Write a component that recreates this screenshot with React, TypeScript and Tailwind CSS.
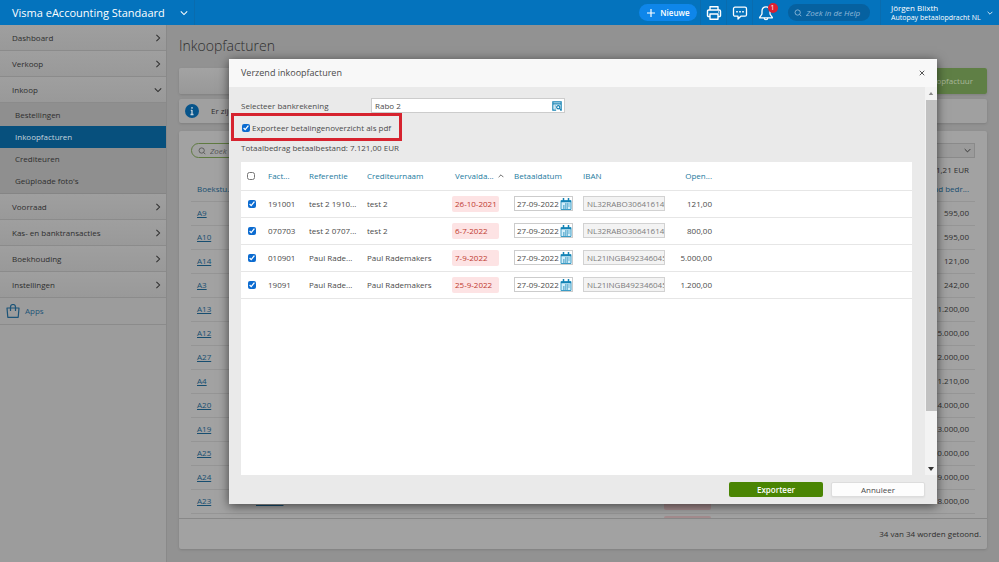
import type { ReactNode } from "react";

const INVOICES = [
  { id: "A9", amount: "595,00" },
  { id: "A10", amount: "595,00" },
  { id: "A14", amount: "121,00" },
  { id: "A3", amount: "242,00" },
  { id: "A13", amount: "1.200,00" },
  { id: "A12", amount: "5.000,00" },
  { id: "A27", amount: "2.000,00" },
  { id: "A4", amount: "1.210,00" },
  { id: "A20", amount: "4.000,00" },
  { id: "A19", amount: "3.000,00" },
  { id: "A25", amount: "10.000,00" },
  { id: "A24", amount: "9.000,00" },
  { id: "A23", amount: "8.000,00", number: "230901", due: "25-9-2022" },
];

const PAYMENTS = [
  { number: "191001", reference: "test 2 1910...", creditor: "test 2", due: "26-10-2021", iban: "NL32RABO3064161486", open: "121,00" },
  { number: "070703", reference: "test 2 0707...", creditor: "test 2", due: "6-7-2022", iban: "NL32RABO3064161486", open: "800,00" },
  { number: "010901", reference: "Paul Rade...", creditor: "Paul Rademakers", due: "7-9-2022", iban: "NL21INGB4923460455", open: "5.000,00" },
  { number: "19091", reference: "Paul Rade...", creditor: "Paul Rademakers", due: "25-9-2022", iban: "NL21INGB4923460455", open: "1.200,00" },
];

function Chevron({ dir = "down", className }: { dir?: "down" | "right" | "up"; className?: string }) {
  const d = { down: "M1 3l4 4 4-4", up: "M1 7l4-4 4 4", right: "M3 1l4 4-4 4" }[dir];
  return (
    <svg viewBox="0 0 10 10" className={className} fill="none" stroke="currentColor" strokeWidth="1.3" aria-hidden="true">
      <path d={d} />
    </svg>
  );
}

function SearchIcon({ className }: { className?: string }) {
  return (
    <svg viewBox="0 0 10 10" className={className} fill="none" stroke="currentColor" strokeWidth="1.1" aria-hidden="true">
      <circle cx="4.6" cy="4.4" r="3.3" />
      <path d="M6.9 6.7l2.2 2.3" />
    </svg>
  );
}

function PrinterIcon() {
  return (
    <svg viewBox="0 0 16 16" className="size-4" fill="none" stroke="currentColor" strokeWidth="1.4" strokeLinejoin="round" aria-hidden="true">
      <path d="M4 5V1.7h8V5M4 11.5H2.6A1.1 1.1 0 011.5 10.4V6.2A1.2 1.2 0 012.7 5h10.6a1.2 1.2 0 011.2 1.2v4.2a1.1 1.1 0 01-1.1 1.1H12" />
      <path d="M4 9h8v5.3H4z" />
      <path d="M12 7h.8" />
    </svg>
  );
}

function ChatIcon() {
  return (
    <svg viewBox="0 0 16 16" className="size-4" fill="none" stroke="currentColor" strokeWidth="1.3" strokeLinejoin="round" aria-hidden="true">
      <path d="M3 2.2h10A1.5 1.5 0 0114.5 3.7v6A1.5 1.5 0 0113 11.2H8.8L6 14v-2.8H3A1.5 1.5 0 011.5 9.7v-6A1.5 1.5 0 013 2.2z" />
      <path d="M4.2 6.7h1.6M7.2 6.7h1.6M10.2 6.7h1.6" strokeWidth="1.6" />
    </svg>
  );
}

function BellIcon() {
  return (
    <svg viewBox="0 0 16 16" className="size-4" fill="none" stroke="currentColor" strokeWidth="1.3" strokeLinejoin="round" aria-hidden="true">
      <path d="M8 1.8c-2.6 0-4 1.9-4 4.2v2.6c0 1.6-1.8 2.2-2.400 4.200h12.800C13.800 10.800 12 10.200 12 8.600V6c0-2.300-1.400-4.200-4-4.200z" />
      <path d="M6.200 12.800c0 2.500 3.600 2.500 3.600 0" />
    </svg>
  );
}

function BagIcon() {
  return (
    <svg viewBox="0 0 14 14" className="size-3.5" fill="none" stroke="currentColor" strokeWidth="1.2" strokeLinejoin="round" aria-hidden="true">
      <path d="M1 4h12l-.8 9.300H1.800z" />
      <path d="M4.500 7V3a2.500 2.500 0 015 0v4" />
    </svg>
  );
}

function LookupIcon() {
  return (
    <svg viewBox="0 0 12 12" className="size-2.5" fill="none" stroke="#1482b4" strokeWidth="1.4" aria-hidden="true">
      <path d="M5 11H1V1h10v10h-1M1 3.500h10" />
      <path d="M3 6h2M3 8.500h1.500" strokeWidth="1" />
      <circle cx="7.500" cy="7.500" r="1.900" />
      <path d="M8.900 8.900l2 2.100" />
    </svg>
  );
}

function CalendarIcon() {
  return (
    <svg viewBox="0 0 12 12" className="size-3" fill="none" aria-hidden="true">
      <path d="M1 2.5h10v9H1z" fill="#d4effa" stroke="#3a9cc6" />
      <path d="M1 3.5h10" stroke="#1482b4" strokeWidth="1.5" />
      <path d="M3.500 0v3M8.500 0v3" stroke="#1482b4" strokeWidth="1.5" />
      <path d="M5 6h4.500M3 8h6.500M3 10h5" stroke="#1482b4" strokeDasharray="1.6 .4" />
    </svg>
  );
}

function NavItem({ label, open = false }: { label: string; open?: boolean }) {
  return (
    <button type="button" className="flex h-[26px] w-full items-center justify-between border-b border-[#8b8b8b] bg-linear-to-b from-[#9f9f9f] to-[#999] pt-px pr-1 pl-3 text-left">
      {label}
      <Chevron dir={open ? "down" : "right"} className="size-2" />
    </button>
  );
}

function Sidebar() {
  return (
    <nav className="w-[167px] shrink-0 border-r border-[#898989] bg-[#9c9c9c] text-[#2e2e2e]">
      <NavItem label="Dashboard" />
      <NavItem label="Verkoop" />
      <NavItem label="Inkoop" open />
      <div className="border-b border-[#858585] bg-[#8f8f8f] py-px">
        {["Bestellingen", "Inkoopfacturen", "Crediteuren", "Geüploade foto's"].map((label) => (
          <a
            key={label}
            href="#"
            className={
              label === "Inkoopfacturen"
                ? "flex h-[22px] items-center bg-[#07507d] pl-[15px] text-[#c4d4de]"
                : "flex h-[22px] items-center pl-[15px]"
            }
          >
            {label}
          </a>
        ))}
      </div>
      <NavItem label="Voorraad" />
      <NavItem label="Kas- en banktransacties" />
      <NavItem label="Boekhouding" />
      <NavItem label="Instellingen" />
      <a href="#" className="flex h-[27px] items-center gap-[5px] border-b border-[#8b8b8b] pl-1.5 text-[#1c5478]">
        <BagIcon />
        Apps
      </a>
    </nav>
  );
}

function HeaderCell({ children }: { children: ReactNode }) {
  return <div className="flex h-full w-[26px] items-center justify-center border-l border-[#0a6cae]">{children}</div>;
}

function TopBar() {
  return (
    <header className="flex h-[25px] shrink-0 items-center bg-[#0473bd] text-white">
      <button type="button" className="flex h-full items-center border-r border-[#0a6cae] pr-1.5 pl-3">
        <span className="w-[168px] text-left text-[11px]">Visma eAccounting Standaard</span>
        <Chevron className="size-2" />
      </button>
      <button type="button" className="mr-[3px] ml-auto flex h-[17px] w-[58px] items-center justify-center gap-1 rounded-full bg-[#0e86ea] font-semibold">
        <svg viewBox="0 0 10 10" className="size-2.5" stroke="currentColor" strokeWidth="1.2" aria-hidden="true">
          <path d="M5 1v8M1 5h8" />
        </svg>
        Nieuwe
      </button>
      <HeaderCell>
        <button type="button" aria-label="Afdrukken"><PrinterIcon /></button>
      </HeaderCell>
      <HeaderCell>
        <button type="button" aria-label="Berichten"><ChatIcon /></button>
      </HeaderCell>
      <HeaderCell>
        <button type="button" aria-label="Meldingen" className="relative">
          <BellIcon />
          <span className="absolute -top-0.5 -right-1 flex size-[10px] items-center justify-center rounded-full bg-[#dc2032] text-[7px] leading-none">1</span>
        </button>
      </HeaderCell>
      <label className="ml-2.5 flex h-[17px] w-[82px] items-center gap-1 rounded-full bg-[#0661a0] pl-1.5 text-[#8fb9da]">
        <SearchIcon className="size-2 shrink-0" />
        <input aria-label="Zoek in de Help" placeholder="Zoek in de Help" className="w-full min-w-0 italic outline-none placeholder:text-[#8fb9da]" />
      </label>
      <button type="button" className="ml-2.5 flex h-full w-[119px] items-center justify-between border-l border-[#0a6cae] pr-1.5 pl-2.5 text-left">
        <span className="leading-[10px] font-medium whitespace-nowrap">
          <span className="block">Jörgen Blixth</span>
          <span className="block text-[7px]">Autopay betaalopdracht NL</span>
        </span>
        <Chevron className="size-1.5 shrink-0" />
      </button>
    </header>
  );
}

function InvoicePage() {
  return (
    <div className="px-3 pt-[11px] text-[#2e2e2e]">
      <h1 className="mb-3 text-[14px] leading-5 font-light">Inkoopfacturen</h1>
      <div className="flex h-[26px] justify-end rounded-xs bg-linear-to-b from-[#a3a3a3] to-[#989898] shadow-sm">
        <button type="button" className="w-[110px] rounded-xs bg-[#5f7f45] pr-3.5 text-right text-[#a9b79b]">Nieuwe inkoopfactuur</button>
      </div>
      <div className="mt-[5px] flex h-6 items-center gap-3 rounded-xs bg-[#a0a0a0] px-1.5 shadow-sm">
        <svg viewBox="0 0 14 14" className="size-3.5" aria-hidden="true">
          <circle cx="7" cy="7" r="7" fill="#07548a" />
          <path d="M7 6v4.500M7 3v1.800M5.800 6.400H7M5.500 10.500h3" stroke="#c5d3dc" strokeWidth="1.3" />
        </svg>
        Er zijn
      </div>
      <section className="mt-2 rounded-xs bg-[#a2a2a2] shadow-sm">
        <div className="h-[387px] overflow-hidden px-3 pt-3">
          <div className="flex items-center justify-between">
            <label className="flex h-[15px] w-[150px] items-center gap-1 rounded-full border border-[#5f7a41] px-1.5 text-[#555]">
              <SearchIcon className="size-2 shrink-0" />
              <input aria-label="Zoek" placeholder="Zoek" className="w-full min-w-0 italic outline-none placeholder:text-[#555]" />
            </label>
            <div className="relative">
              <select aria-label="Filter" className="block h-[15px] w-[150px] appearance-none border border-[#8a8a8a] bg-[#9b9b9b]" />
              <Chevron className="pointer-events-none absolute top-1 right-1 size-[7px]" />
            </div>
          </div>
          <p className="flex h-[19px] items-end justify-end pr-1.5 pb-px">29.151,21 EUR</p>
          <table className="w-full table-fixed border-collapse">
            <thead>
              <tr className="h-6 border-b border-[#959595] text-left text-[#174e70]">
                <th className="w-[65px] pl-1.5 font-normal whitespace-nowrap">Boekstu...</th>
                <th className="w-[400px]" />
                <th />
                <th className="w-20 pr-1.5 text-right font-normal whitespace-nowrap">Openstaand bedr...</th>
              </tr>
            </thead>
            <tbody>
              {INVOICES.map((invoice) => (
                <tr key={invoice.id} className="h-6 border-b border-[#959595]">
                  <td className="pl-1.5"><a href="#" className="text-[#174e70] underline">{invoice.id}</a></td>
                  <td><a href="#" className="text-[#174e70] underline">{invoice.number}</a></td>
                  <td>
                    {invoice.due && <span className="ml-2 block h-[18px] w-[47px] rounded-xs bg-[#a38b8d] px-1 leading-[18px] text-[#84202a]">{invoice.due}</span>}
                  </td>
                  <td className="pr-1.5 text-right">{invoice.amount}</td>
                </tr>
              ))}
              <tr className="h-6">
                <td colSpan={2} />
                <td><span className="ml-2 block h-[18px] w-[47px] rounded-xs bg-[#a38b8d]" /></td>
                <td />
              </tr>
            </tbody>
          </table>
        </div>
        <footer className="flex h-[31px] items-center justify-end border-t border-[#888] pr-1.5">34 van 34 worden getoond.</footer>
      </section>
    </div>
  );
}

function PaymentTable() {
  return (
    <div className="h-[313px] bg-white">
      <table className="w-full table-fixed border-collapse">
        <thead>
          <tr className="h-7 border-b border-[#e6e6e6] text-left text-[#237a9e]">
            <th className="w-[27px] pl-1.5"><input type="checkbox" aria-label="Alles selecteren" className="block size-2" /></th>
            <th className="w-[41px] font-normal">Fact...</th>
            <th className="w-[58px] font-normal">Referentie</th>
            <th className="w-[85px] font-normal">Crediteurnaam</th>
            <th className="w-[62px] pl-[3px] font-normal" aria-sort="ascending">
              <span className="flex items-center gap-1">Vervalda...<Chevron dir="up" className="size-1.5 text-[#444]" /></span>
            </th>
            <th className="w-[69px] font-normal">Betaaldatum</th>
            <th className="w-[83px] font-normal">IBAN</th>
            <th className="w-[46px] text-right font-normal">Open...</th>
            <th />
          </tr>
        </thead>
        <tbody>
          {PAYMENTS.map((payment) => (
            <tr key={payment.number} className="h-[27px] border-b border-[#e6e6e6]">
              <td className="pl-[7px]"><input type="checkbox" defaultChecked aria-label={payment.number} className="block size-2 accent-[#0b6bd0]" /></td>
              <td>{payment.number}</td>
              <td>{payment.reference}</td>
              <td>{payment.creditor}</td>
              <td><span className="block h-4 w-[47px] rounded-xs bg-[#fde3e4] px-[3px] leading-4 whitespace-nowrap text-[#c0392f]">{payment.due}</span></td>
              <td>
                <div className="flex h-[15px] w-[59px] items-center border border-[#ccc] bg-white pl-0.5">
                  <input aria-label="Betaaldatum" defaultValue="27-09-2022" className="w-full min-w-0 outline-none" />
                  <button type="button" aria-label="Kalender" className="shrink-0"><CalendarIcon /></button>
                </div>
              </td>
              <td>
                <input aria-label="IBAN" readOnly defaultValue={payment.iban} className="block h-[15px] w-[82px] border border-[#d2d2d2] bg-[#f3f3f3] pl-[3px] text-[#7c7c7c] outline-none" />
              </td>
              <td className="text-right">{payment.open}</td>
              <td />
            </tr>
          ))}
        </tbody>
      </table>
    </div>
  );
}

function ExportDialog() {
  return (
    <div role="dialog" aria-label="Verzend inkoopfacturen" className="w-[708px] bg-[#eaeaea] text-[#4a4a4a] shadow-[0_2px_10px_rgba(0,0,0,0.6)]">
      <div className="flex h-7 items-center justify-between bg-[#f8f8f8] pr-3 pl-3">
        <h2 className="text-[9px]">Verzend inkoopfacturen</h2>
        <button type="button" aria-label="Sluiten">
          <svg viewBox="0 0 8 8" className="size-1.5" stroke="#444" strokeWidth="1.2" aria-hidden="true">
            <path d="M1 1l6 6M7 1L1 7" />
          </svg>
        </button>
      </div>
      <div className="flex">
        <div className="min-w-0 flex-1 pt-[11px] pr-[13px] pl-3">
          <div className="flex items-center">
            <label htmlFor="account" className="w-[130px]">Selecteer bankrekening</label>
            <div className="flex h-[15px] w-[194px] items-center border border-[#ccc] bg-white pr-0.5 pl-[3px]">
              <input id="account" defaultValue="Rabo 2" className="w-full min-w-0 outline-none" />
              <button type="button" aria-label="Zoek rekening" className="shrink-0"><LookupIcon /></button>
            </div>
          </div>
          <div className="-ml-2.5 flex h-7 w-[171px] items-center gap-0.5 border-[3px] border-[#d6232f] pt-px pl-2">
            <input id="export-pdf" type="checkbox" defaultChecked className="size-2 shrink-0 accent-[#0b6bd0]" />
            <label htmlFor="export-pdf" className="whitespace-nowrap">Exporteer betalingenoverzicht als pdf</label>
          </div>
          <p className="mb-2 leading-[13px]">Totaalbedrag betaalbestand: 7.121,00 EUR</p>
          <PaymentTable />
        </div>
        <div className="flex w-3 flex-col items-center bg-[#f3f3f3]" aria-hidden="true">
          <svg viewBox="0 0 6 4" className="my-[5px] h-[3px] w-1.5" fill="#888"><path d="M0 4l3-4 3 4z" /></svg>
          <div className="h-[311px] w-[11px] bg-[#c1c1c1]" />
          <svg viewBox="0 0 6 4" className="mt-auto mb-1 h-[4px] w-1.5" fill="#333"><path d="M0 0l3 4 3-4z" /></svg>
        </div>
      </div>
      <div className="flex h-[29px] items-center justify-end gap-2 pr-3">
        <button type="button" className="h-[15px] w-[94px] rounded-xs bg-[#4a8503] font-semibold text-white">Exporteer</button>
        <button type="button" className="h-[15px] w-[94px] rounded-xs border border-[#ddd] bg-[#fdfdfd] shadow-xs">Annuleer</button>
      </div>
    </div>
  );
}

export default function App() {
  return (
    <div className="flex min-h-screen flex-col bg-[#929292] font-['Open_Sans',sans-serif] text-[8px] leading-3">
      <TopBar />
      <div className="flex flex-1">
        <Sidebar />
        <main className="relative min-w-0 flex-1">
          <InvoicePage />
          <div className="absolute inset-0 flex items-start justify-center pt-[34px]">
            <ExportDialog />
          </div>
        </main>
      </div>
    </div>
  );
}
